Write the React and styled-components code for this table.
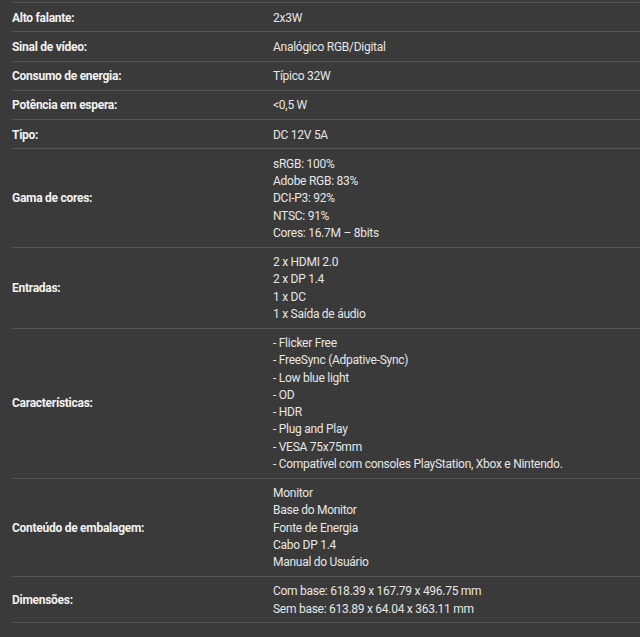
import styled, { createGlobalStyle } from "styled-components";

const GlobalStyle = createGlobalStyle`
  html, body {
    margin: 0;
    padding: 0;
    background: #3a3a3a;
  }
`;

const Page = styled.div`
  background: #3a3a3a;
  min-height: 637px;
  padding: 2px 0 0 12px;
  box-sizing: border-box;
  font-family: Roboto, "Liberation Sans", sans-serif;
  font-size: 12px;
  line-height: 17.25px;
  letter-spacing: -0.27px;
  color: #ededed;
`;

const SpecTable = styled.div`
  display: flex;
  flex-direction: column;
  border-bottom: 1px solid #545454;
`;

const Row = styled.div`
  display: grid;
  grid-template-columns: 261px 1fr;
  align-items: center;
  padding: 6.5px 0 4.5px;
  border-top: 1px solid #545454;
`;

const Label = styled.div`
  font-weight: 700;
  color: #f2f2f2;
`;

const Value = styled.div`
  display: flex;
  flex-direction: column;
  color: #e6e6e6;
`;

const specs = [
  { label: "Alto falante:", values: ["2x3W"] },
  { label: "Sinal de vídeo:", values: ["Analógico RGB/Digital"] },
  { label: "Consumo de energia:", values: ["Típico 32W"] },
  { label: "Potência em espera:", values: ["<0,5 W"] },
  { label: "Tipo:", values: ["DC 12V 5A"] },
  {
    label: "Gama de cores:",
    values: ["sRGB: 100%", "Adobe RGB: 83%", "DCI-P3: 92%", "NTSC: 91%", "Cores: 16.7M – 8bits"],
  },
  {
    label: "Entradas:",
    values: ["2 x HDMI 2.0", "2 x DP 1.4", "1 x DC", "1 x Saída de áudio"],
  },
  {
    label: "Características:",
    values: [
      "- Flicker Free",
      "- FreeSync (Adpative-Sync)",
      "- Low blue light",
      "- OD",
      "- HDR",
      "- Plug and Play",
      "- VESA 75x75mm",
      "- Compatível com consoles PlayStation, Xbox e Nintendo.",
    ],
  },
  {
    label: "Conteúdo de embalagem:",
    values: ["Monitor", "Base do Monitor", "Fonte de Energia", "Cabo DP 1.4", "Manual do Usuário"],
  },
  {
    label: "Dimensões:",
    values: ["Com base: 618.39 x 167.79 x 496.75 mm", "Sem base: 613.89 x 64.04 x 363.11 mm"],
  },
];

const App = () => {
  return (
    <Page>
      <GlobalStyle />
      <SpecTable>
        {specs.map((spec) => (
          <Row key={spec.label}>
            <Label>{spec.label}</Label>
            <Value>
              {spec.values.map((v) => (
                <span key={v}>{v}</span>
              ))}
            </Value>
          </Row>
        ))}
      </SpecTable>
    </Page>
  );
};

export default App;
